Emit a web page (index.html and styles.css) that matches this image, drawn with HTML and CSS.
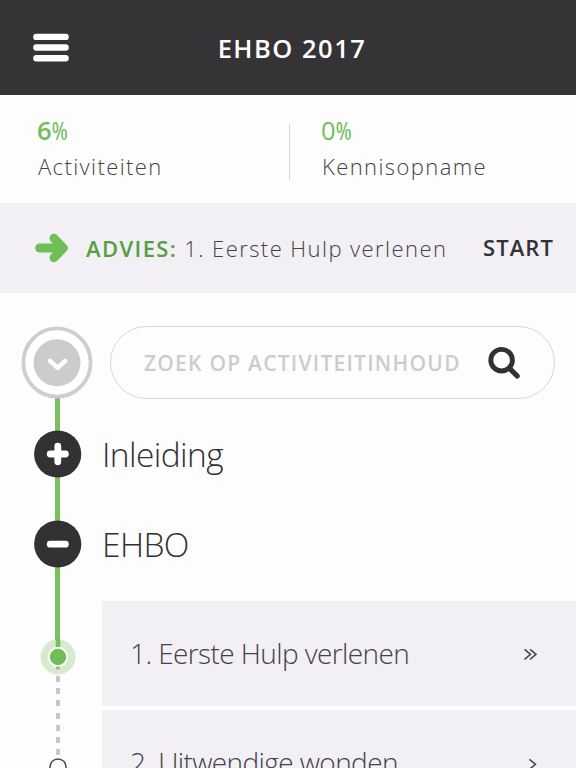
FILE: index.html
```html
<!DOCTYPE html>
<html lang="nl">
<head>
  <meta charset="UTF-8">
  <meta name="viewport" content="width=device-width, initial-scale=1.0">
  <title>EHBO 2017</title>
  <link rel="stylesheet" href="styles.css">
</head>
<body>
  <header class="topbar">
    <svg class="menu-icon" width="36" height="29" viewBox="0 0 36 29">
      <g stroke="#fff" stroke-width="6.4" stroke-linecap="round">
        <path d="M3.4 3.9h29.2M3.4 14.5h29.2M3.4 25.2h29.2"/>
      </g>
    </svg>
    <h1 class="title">EHBO 2017</h1>
  </header>

  <section class="stats">
    <div class="stat">
      <div class="stat-value stat-strong">6<span class="percent">%</span></div>
      <div class="stat-label">Activiteiten</div>
    </div>
    <div class="stat stat-right">
      <div class="stat-value">0<span class="percent">%</span></div>
      <div class="stat-label">Kennisopname</div>
    </div>
  </section>

  <section class="advice">
    <svg class="arrow-icon" width="34" height="30" viewBox="0 0 34 30">
      <g fill="none" stroke="#6fbe57" stroke-width="9" stroke-linecap="round" stroke-linejoin="round">
        <path d="M4.7 15H26"/>
        <path d="M19 5.3l9.3 9.7-9.3 9.7" fill="#6fbe57"/>
      </g>
    </svg>
    <span class="advice-label">ADVIES:</span>
    <span class="advice-text">1. Eerste Hulp verlenen</span>
    <a class="start">START</a>
  </section>

  <main class="content">
    <div class="row row-search">
      <div class="node">
        <svg width="72" height="74" viewBox="0 0 72 74">
          <ellipse cx="36" cy="36.5" rx="33.6" ry="34.2" fill="#fff" stroke="#d0cdd1" stroke-width="3.8"/>
          <circle cx="36" cy="36.8" r="23.5" fill="#cecbcf"/>
          <path d="M29 34.9l7.6 7 7.6-7" fill="none" stroke="#fff" stroke-width="4.6" stroke-linecap="round" stroke-linejoin="round"/>
        </svg>
      </div>
      <div class="search">
        <span class="placeholder">ZOEK OP ACTIVITEITINHOUD</span>
        <svg class="search-icon" width="34" height="34" viewBox="0 0 34 34">
          <g fill="none" stroke="#333134" stroke-linecap="round">
            <circle cx="14.6" cy="14.2" r="10.8" stroke-width="4.9"/>
            <path d="M23 22.8l7.2 7.2" stroke-width="5.2"/>
          </g>
        </svg>
      </div>
    </div>

    <div class="row row-chapter">
      <div class="node">
        <svg width="48" height="48" viewBox="0 0 48 48">
          <circle cx="23.7" cy="24" r="23.6" fill="#333134"/>
          <path d="M16.2 24h15.2M23.8 16.2v15.6" stroke="#fff" stroke-width="6.8" stroke-linecap="round"/>
        </svg>
      </div>
      <h2 class="chapter">Inleiding</h2>
    </div>

    <div class="row row-chapter">
      <div class="node">
        <svg width="48" height="48" viewBox="0 0 48 48">
          <circle cx="23.7" cy="24" r="23.6" fill="#333134"/>
          <path d="M16.2 24.2h15.2" stroke="#fff" stroke-width="6.8" stroke-linecap="round"/>
        </svg>
      </div>
      <h2 class="chapter">EHBO</h2>
    </div>

    <div class="row row-item row-current">
      <div class="node">
        <svg width="36" height="36" viewBox="0 0 36 36">
          <circle cx="18" cy="18" r="17.5" fill="#d5ebcd"/>
          <path d="M18 0v10" stroke="#78c15f" stroke-width="4.6"/>
          <circle cx="18" cy="18" r="10.3" fill="#fff"/>
          <path d="M18 27.5v3" stroke="#a9bba4" stroke-width="4"/>
          <circle cx="18" cy="18" r="8.2" fill="#6fbe57"/>
        </svg>
      </div>
      <div class="item">
        <span class="item-title">1. Eerste Hulp verlenen</span>
        <svg class="chevron" width="16" height="14" viewBox="0 0 16 14">
          <path d="M1.5 2.3l6 5-6 5M7 2.3l6 5-6 5" fill="none" stroke="#4a484b" stroke-width="1.6"/>
        </svg>
      </div>
    </div>

    <div class="row row-item row-next">
      <div class="node">
        <svg width="36" height="36" viewBox="0 0 36 36">
          <circle cx="18" cy="18" r="8" fill="#fff" stroke="#4a484b" stroke-width="1.5"/>
        </svg>
      </div>
      <div class="item">
        <span class="item-title">2. Uitwendige wonden</span>
        <svg class="chevron" width="16" height="14" viewBox="0 0 16 14">
          <path d="M6.5 3.3l6 5-6 5" fill="none" stroke="#4a484b" stroke-width="1.6"/>
        </svg>
      </div>
    </div>
  </main>
</body>
</html>
```
FILE: styles.css
```css
* {
  box-sizing: border-box;
}
html {
  overflow: hidden;
}
body {
  margin: 0;
  height: 768px;
  overflow: hidden;
  background: #fefdfe;
  color: #444245;
  font-family: "Open Sans", "Noto Sans", sans-serif;
  white-space: nowrap;
}
svg {
  display: block;
  flex: none;
}
.topbar {
  display: grid;
  grid-template-columns: 103px 1fr 103px;
  align-items: center;
  height: 95px;
  background: #363336;
}
.menu-icon {
  margin-left: 33px;
}
.title {
  margin: 0 0 0 8px;
  color: #fff;
  font-size: 25.5px;
  font-weight: 600;
  letter-spacing: 1.5px;
  text-align: center;
}

/* progress numbers */
.stats {
  display: grid;
  grid-template-columns: 290px 1fr;
  height: 108px;
  padding-top: 19px;
}
.stat {
  padding-left: 37px;
}
.stat:first-child {
  height: 56px;
  margin-top: 10px;
  border-right: 1px solid #d9d6db;
}
.stat:first-child .stat-value {
  margin-top: -10px;
}
.stat-right {
  padding-left: 31px;
}
.stat-value {
  height: 32px;
  line-height: 32px;
  color: #6fbe57;
  font-size: 25.5px;
}
.stat-strong {
  font-weight: 600;
}
.percent {
  font-size: 25px;
  font-stretch: 75%;
  font-weight: 400;
}
.stat-label {
  margin: 3px 0 0 1px;
  font-size: 22px;
  font-weight: 300;
  line-height: 34px;
  letter-spacing: 1.4px;
}

/* advice bar */
.advice {
  display: flex;
  align-items: center;
  height: 90px;
  padding: 0 22px 0 35px;
  background: #f2f0f4;
  font-size: 22px;
}
.advice-label {
  margin-left: 17px;
  color: #559f43;
  font-weight: 600;
  letter-spacing: 1.4px;
}
.advice-text {
  margin-left: 7px;
  font-weight: 300;
  letter-spacing: 1.43px;
}
.start {
  margin: -2px 0 0 auto;
  color: #333134;
  font-weight: 600;
  letter-spacing: 1.1px;
}

/* timeline */
.content {
  height: 475px;
  padding-top: 33px;
  overflow: hidden;
}
.row {
  position: relative;
  display: flex;
  align-items: center;
}
.row::before {
  content: "";
  position: absolute;
  z-index: -1;
  left: 55px;
  top: 0;
  bottom: 0;
  width: 5px;
  background: #78c15f;
}
.node {
  display: flex;
  flex: none;
  justify-content: center;
  width: 115px;
}
.row-search {
  height: 73px;
  margin-bottom: 10px;
}
.row-search::before {
  top: 70px;
  bottom: -10px;
}
.row-search .node {
  width: 110px;
  padding-left: 4px;
}
.search {
  display: flex;
  align-items: center;
  width: 445px;
  height: 73px;
  padding: 0 33px;
  border: 1px solid #d9d6db;
  border-radius: 37px;
}
.placeholder {
  color: #cecbcf;
  font-size: 21px;
  font-weight: 600;
  letter-spacing: 1.24px;
}
.search-icon {
  margin-left: auto;
}
.row-chapter {
  height: 90px;
}
.chapter {
  margin: 0 0 0 -13px;
  color: #333134;
  font-size: 33.5px;
  font-weight: 300;
  letter-spacing: -0.6px;
}
.row-item {
  height: 105px;
  margin-top: 4px;
}
.row-item .node {
  width: 102px;
  padding: 7px 0 0 14px;
}
.row-current {
  margin-top: 12px;
}
.row-current::before {
  top: -12px;
  bottom: 50px;
}
.row-current::after {
  content: "";
  position: absolute;
  left: 56px;
  top: 75px;
  width: 4px;
  height: 84px;
  background: repeating-linear-gradient(#c9c6ca 0 6px, transparent 6px 12.2px);
}
.row-next::before {
  display: none;
}
.row-next .node {
  position: relative;
  padding-top: 9px;
}
.item {
  display: flex;
  flex: 1;
  align-items: center;
  height: 105px;
  padding: 0 37px 0 28px;
  background: #f2f0f4;
}
.item-title {
  margin-top: -2px;
  font-size: 28px;
  font-weight: 300;
  letter-spacing: -0.6px;
}
.chevron {
  margin-left: auto;
}
```
